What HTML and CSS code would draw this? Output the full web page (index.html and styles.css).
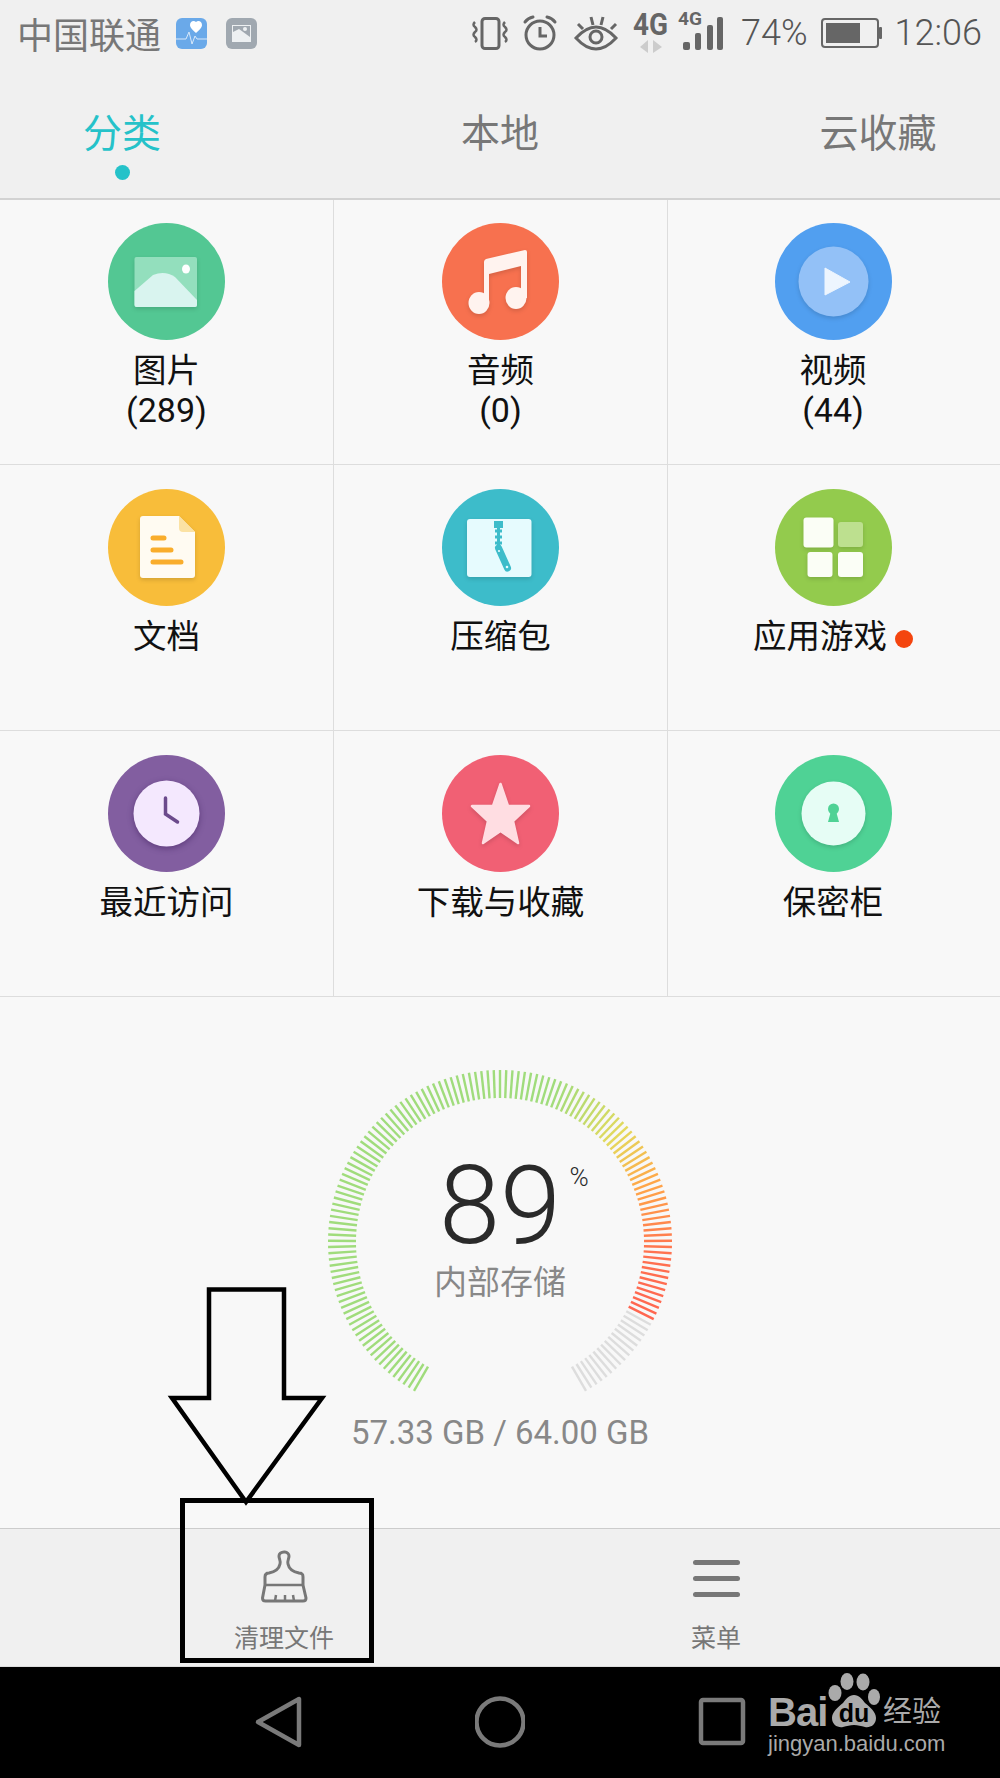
FILE: index.html
```html
<!DOCTYPE html>
<html lang="zh-CN">
<head>
<meta charset="UTF-8">
<meta name="viewport" content="width=device-width, initial-scale=1.0">
<link rel="stylesheet" href="styles.css">
<title>文件管理</title>
</head>
<body>
<div class="phone">

  <div class="status">
    <span class="carrier">中国联通</span>
    <svg class="note-icon" width="31" height="31" viewBox="0 0 31 31">
      <rect width="31" height="31" rx="6" fill="#6aa9e9"/>
      <path d="M20 4c2-2 6-1 6 3 0 3-3 5-6 8-3-3-6-5-6-8 0-4 4-5 6-3z" fill="#fff"/>
      <path d="M0 21h10l3-7 3 12 3-8 2 3h10" fill="none" stroke="#d8e8fa" stroke-width="1"/>
    </svg>
    <svg class="note-icon" width="31" height="31" viewBox="0 0 31 31">
      <rect width="31" height="31" rx="6" fill="#a0a8b0"/>
      <rect x="6" y="7" width="19" height="17" fill="#edf0f2"/>
      <path d="M7 14l6-3 11 8v-11h-17z" fill="#a0a8b0"/>
      <circle cx="19" cy="11" r="2" fill="#edf0f2"/>
    </svg>

    <svg class="status-icons" width="251" height="66" viewBox="0 0 251 66">
      <g fill="none" stroke="#666" stroke-width="3">
        <rect x="10" y="18.500" width="17" height="30" rx="3"/>
        <path d="M3 22q-3 3 0 5q3 3 0 5q-3 3 0 5q3 3 0 5" stroke-width="2.500"/>
        <path d="M33 22q-3 3 0 5q3 3 0 5q-3 3 0 5q3 3 0 5" stroke-width="2.500"/>
        <circle cx="68" cy="35" r="14"/>
        <path d="M68 27v9h7"/>
        <path d="M53 22q3-4 8-5M83 22q-3-4-8-5" stroke-linecap="round"/>
        <path d="M104 38Q124 16 144 38Q124 60 104 38z"/>
        <circle cx="124" cy="37" r="6"/>
        <path d="M106 24l5 5M119 17l2 8M131 17l-2 8M144 24l-5 5"/>
      </g>
      <text class="net-big" x="161" y="35" textLength="35" lengthAdjust="spacingAndGlyphs">4G</text>
      <polygon points="176,40 176,53 168,47" fill="#ccc"/>
      <polygon points="181,40 181,53 190,47" fill="#ccc"/>
      <text class="net-small" x="206" y="25" textLength="24" lengthAdjust="spacingAndGlyphs">4G</text>
      <g fill="#666">
        <rect x="211" y="42" width="7" height="8" rx="2"/>
        <rect x="223" y="33" width="6" height="17" rx="2"/>
        <rect x="235" y="25" width="6" height="25" rx="2"/>
        <rect x="245" y="17" width="6" height="33" rx="2"/>
      </g>
    </svg>
    <span class="level">74%</span>
    <svg class="battery" width="61" height="30" viewBox="0 0 61 30">
      <rect x="1" y="1" width="56" height="28" rx="3" fill="none" stroke="#666" stroke-width="2"/>
      <rect x="5" y="5" width="34" height="20" fill="#666"/>
      <rect x="58" y="9" width="3" height="12" rx="1" fill="#666"/>
    </svg>
    <span class="clock">12:06</span>
  </div>

  <div class="tabs">
    <div class="tab tab-active">分类<i class="tab-dot"></i></div>
    <div class="tab">本地</div>
    <div class="tab">云收藏</div>
  </div>

  <div class="grid">
    <div class="cat">
      <svg class="cat-icon" viewBox="0 0 117 117">
        <circle cx="58.500" cy="58.500" r="58.500" fill="#53c793"/>
        <rect class="soft" x="26.500" y="34" width="62.500" height="50" rx="2" fill="#93dfbd"/>
        <path d="M26.500 68L45 52q12-5 22 2l22 23v5q0 2-2 2H28.500q-2 0-2-2z" fill="#d9f4ef"/>
        <ellipse cx="78" cy="46" rx="4" ry="4.500" fill="#fff"/>
      </svg>
      <div class="cat-name">图片</div>
      <div class="cat-count">(289)</div>
    </div>
    <div class="cat">
      <svg class="cat-icon" viewBox="0 0 117 117">
        <circle cx="58.500" cy="58.500" r="58.500" fill="#f7714f"/>
        <g class="soft" fill="#fff3ef">
          <path d="M42 39q0-2 2-3l39-9q2 0 2 2v46h-6V43l-32 8v30h-5z"/>
          <ellipse cx="37" cy="80" rx="10.500" ry="11"/>
          <ellipse cx="74" cy="75" rx="10.500" ry="11"/>
        </g>
      </svg>
      <div class="cat-name">音频</div>
      <div class="cat-count">(0)</div>
    </div>
    <div class="cat">
      <svg class="cat-icon" viewBox="0 0 117 117">
        <circle cx="58.500" cy="58.500" r="58.500" fill="#519ff0"/>
        <circle class="soft" cx="58.500" cy="58.500" r="35" fill="#93c1f7"/>
        <path d="M50 45l25 14-25 13z" fill="#edf5fe" stroke="#edf5fe" stroke-linejoin="round"/>
      </svg>
      <div class="cat-name">视频</div>
      <div class="cat-count">(44)</div>
    </div>

    <div class="cat">
      <svg class="cat-icon" viewBox="0 0 117 117">
        <circle cx="58.500" cy="58.500" r="58.500" fill="#f8bd3a"/>
        <path class="soft" d="M35 27h36l16 16v43q0 3-3 3H35q-3 0-3-3V30q0-3 3-3z" fill="#fffbf2"/>
        <path d="M71 27l16 16H75q-4 0-4-4z" fill="#fbe2a4"/>
        <g stroke="#f9ad2c" stroke-width="5" stroke-linecap="round">
          <path d="M45 49h11M45 61h18M45 73h28"/>
        </g>
      </svg>
      <div class="cat-name">文档</div>
    </div>
    <div class="cat">
      <svg class="cat-icon" viewBox="0 0 117 117">
        <circle cx="58.500" cy="58.500" r="58.500" fill="#3dbcca"/>
        <rect class="soft" x="25" y="30" width="64.500" height="58" rx="3" fill="#e6fbfe"/>
        <rect x="52" y="32" width="9" height="7" fill="#3dbcca"/>
        <path d="M56.500 39v18M53 42h7M53 48h7M53 54h7" stroke="#3dbcca" stroke-width="3"/>
        <path d="M56.500 59l9 20" stroke="#3dbcca" stroke-width="7" stroke-linecap="round"/>
        <circle cx="65" cy="78" r="1.300" fill="#e6fbfe"/>
        <circle cx="57" cy="62" r="1.100" fill="#e6fbfe"/>
      </svg>
      <div class="cat-name">压缩包</div>
    </div>
    <div class="cat">
      <svg class="cat-icon" viewBox="0 0 117 117">
        <circle cx="58.500" cy="58.500" r="58.500" fill="#93cb4d"/>
        <g class="soft" fill="#fbfef6">
          <rect x="28.500" y="28.500" width="30" height="30" rx="3"/>
          <rect x="63" y="33" width="25" height="25" rx="3" fill="#bde08f"/>
          <rect x="32.500" y="63" width="25" height="25" rx="3"/>
          <rect x="63" y="63" width="25" height="25" rx="3"/>
        </g>
      </svg>
      <div class="cat-name">应用游戏<i class="new-dot"></i></div>
    </div>

    <div class="cat">
      <svg class="cat-icon" viewBox="0 0 117 117">
        <circle cx="58.500" cy="58.500" r="58.500" fill="#825ea0"/>
        <circle class="soft-dark" cx="58.500" cy="58.500" r="33" fill="#f4e8fe"/>
        <path d="M57.500 43v16l12 8" fill="none" stroke="#6b4a8c" stroke-width="3.500" stroke-linecap="round"/>
      </svg>
      <div class="cat-name">最近访问</div>
    </div>
    <div class="cat">
      <svg class="cat-icon" viewBox="0 0 117 117">
        <circle cx="58.500" cy="58.500" r="58.500" fill="#f16074"/>
        <polygon class="soft" points="58.500,29 66,51 87,51 71,66 76,88 58.500,76 41,88 46,66 30,51 51,51" fill="#ffdde2" stroke="#ffdde2" stroke-width="2.500" stroke-linejoin="round"/>
      </svg>
      <div class="cat-name">下载与收藏</div>
    </div>
    <div class="cat">
      <svg class="cat-icon" viewBox="0 0 117 117">
        <circle cx="58.500" cy="58.500" r="58.500" fill="#4fd295"/>
        <circle class="soft" cx="58.500" cy="58.500" r="32" fill="#e6fdf5"/>
        <circle cx="58.500" cy="54" r="5.500" fill="#4fd295"/>
        <path d="M56 56h5l3 11H53z" fill="#4fd295"/>
      </svg>
      <div class="cat-name">保密柜</div>
    </div>
  </div>

  <div class="storage">
    <div class="gauge">
      <svg id="gaugeTicks" width="380" height="340" viewBox="0 0 380 340"></svg>
      <div class="gauge-text">
        <div class="gauge-num">89<span class="gauge-pct">%</span></div>
        <div class="gauge-label">内部存储</div>
      </div>
    </div>
    <div class="storage-size">57.33 GB / 64.00 GB</div>
  </div>

  <div class="actions">
    <div class="action">
      <svg width="47" height="53" viewBox="0 0 47 53" fill="none" stroke="#777" stroke-width="3" stroke-linejoin="round">
        <path d="M23 2c-3 0-5 2-5 4 0 3 2 5 1 8-1 5-6 8-11 9-3 0-4 2-4 4v8L1.500 48c0 2 1 3 3 3H42c2 0 3-1 3-3l-3-13v-8c0-3-1-4-4-4-5-1-10-4-11-9-1-3 1-5 1-8 0-2-2-4-4-4z"/>
        <path d="M4 35h38M14 51l1-6M24 51v-6M33 51l-1-6" stroke-width="2.500"/>
      </svg>
      <span class="action-name">清理文件</span>
    </div>
    <div class="action">
      <div class="menu-icon"><i></i><i></i><i></i></div>
      <span class="action-name">菜单</span>
    </div>
  </div>

  <div class="nav">
    <svg width="50" height="54" viewBox="0 0 50 54" fill="none" stroke="#7a7a7a" stroke-width="4.500" stroke-linejoin="round">
      <path d="M5 27L46 4v46z"/>
    </svg>
    <svg width="50" height="54" viewBox="0 0 50 54" fill="none" stroke="#7a7a7a" stroke-width="4.500">
      <circle cx="25" cy="27" r="23.500"/>
    </svg>
    <svg width="50" height="54" viewBox="0 0 50 54" fill="none" stroke="#7a7a7a" stroke-width="4.500" stroke-linejoin="round">
      <rect x="4" y="5" width="42" height="43" rx="2"/>
    </svg>
  </div>

  <div class="watermark">
    <div class="wm-top">
      <span class="wm-bai">Bai</span>
      <svg class="wm-paw" width="52" height="56" viewBox="0 0 52 56">
        <g fill="#aaa">
          <ellipse cx="7" cy="20" rx="6.500" ry="8"/>
          <ellipse cx="19" cy="8.500" rx="6.500" ry="8.500"/>
          <ellipse cx="35" cy="9" rx="6.500" ry="8.500"/>
          <ellipse cx="46" cy="24" rx="6" ry="8"/>
          <path d="M26 22c5 0 8 4 11 8 5 4 11 9 11 15 0 7-6 10-11 9-4-1-7-2-11-2-4 0-7 1-11 2-5 1-11-2-11-9 0-6 6-11 11-15 3-4 6-8 11-8z"/>
        </g>
        <text class="wm-du" x="26" y="49" text-anchor="middle">du</text>
      </svg>
      <span class="wm-cn">经验</span>
    </div>
    <div class="wm-url">jingyan.baidu.com</div>
  </div>

  <svg class="marks" width="215" height="390" viewBox="0 0 215 390" fill="none" stroke="#000" stroke-width="4.500">
    <path d="M44 9.500V118H7L81 222 157 118H119V9.500z" stroke-linejoin="miter"/>
    <rect x="17.500" y="220.500" width="189" height="160" stroke-width="5"/>
  </svg>
</div>
<script src="gauge.js"></script>
</body>
</html>
```

FILE: styles.css
```css
body {
  margin: 0;
  background-color: #f8f8f8;
  font-family: "Noto Sans CJK SC", sans-serif;
}

.phone {
  position: relative;
  width: 1000px;
  height: 1778px;
  overflow: hidden;
  display: flex;
  flex-direction: column;
}

/* status bar */
.status {
  height: 66px;
  display: flex;
  align-items: center;
  padding: 0 18px;
  background-color: #f0f0f0;
  color: #777;
  flex: none;
}

.carrier {
  font-size: 36px;
  line-height: 40px;
  width: 142px;
  margin-left: -1px;
  margin-right: 1px;
  white-space: nowrap;
}

.note-icon {
  margin-left: 16px;
  margin-right: 3px;
}

.status-icons {
  margin-left: auto;
}

.net-big {
  font: bold 32px Roboto, sans-serif;
  fill: #666;
}

.net-small {
  font: bold 18px Roboto, sans-serif;
  fill: #666;
}

.level,
.clock {
  font-family: Roboto, sans-serif;
  font-size: 36px;
  font-weight: 300;
  color: #555;
  line-height: 40px;
}

.level {
  margin-left: 18px;
}

.battery {
  margin-left: 13px;
}

.clock {
  margin-left: 13px;
}

/* tabs */
.tabs {
  height: 132px;
  display: flex;
  justify-content: space-between;
  background-color: #f0f0f0;
  border-bottom: 2px solid #d2d2d2;
  flex: none;
}

.tab {
  width: 244px;
  padding-top: 41px;
  text-align: center;
  font-size: 39px;
  line-height: 46px;
  color: #777;
}

.tab-active {
  color: #25c2c9;
}

.tab-dot {
  display: block;
  width: 15px;
  height: 15px;
  margin: 12px auto 0;
  border-radius: 50%;
  background-color: #25c2c9;
}

/* category grid */
.grid {
  display: grid;
  grid-template-columns: 334px 334px 332px;
  flex: none;
}

.cat {
  height: 241px;
  border-bottom: 1px solid #ddd;
  border-right: 1px solid #ddd;
  padding-top: 24px;
  text-align: center;
  color: #111;
  font-size: 33.500px;
  line-height: 40px;
}

.cat:nth-child(-n+3) {
  padding-top: 23px;
}

.cat:nth-child(3n) {
  border-right: none;
  padding-right: 2px;
}

.cat-icon {
  display: block;
  width: 117px;
  height: 117px;
  margin: 0 auto 8px;
}

.soft {
  filter: drop-shadow(0 2px 2px rgba(0, 0, 0, 0.14));
}

.soft-dark {
  filter: drop-shadow(0 2px 3px rgba(40, 10, 70, 0.4));
}

.cat-count {
  font-family: Roboto, sans-serif;
  font-size: 34px;
  line-height: 38px;
  margin-top: 3px;
}

.new-dot {
  display: inline-block;
  width: 18px;
  height: 18px;
  margin-left: 8px;
  border-radius: 50%;
  background-color: #f4450f;
}

/* storage gauge */
.storage {
  height: 531px;
  padding-top: 63px;
  box-sizing: border-box;
  text-align: center;
  flex: none;
}

.gauge {
  position: relative;
  width: 380px;
  height: 340px;
  margin: 0 auto;
}

.gauge svg {
  display: block;
}

.gauge-text {
  position: absolute;
  left: 0;
  right: 0;
  top: 92px;
}

.gauge-num {
  position: relative;
  display: block;
  width: 123px;
  margin: 0 auto;
  font-family: Roboto, sans-serif;
  font-weight: 300;
  font-size: 110px;
  line-height: 108px;
  color: #2a2a2a;
}

.gauge-pct {
  position: absolute;
  left: 100%;
  top: 10px;
  margin-left: 8px;
  font-size: 26px;
  line-height: 30px;
}

.gauge-label {
  font-size: 33px;
  line-height: 36px;
  color: #888;
  margin-top: 2px;
}

.storage-size {
  font-family: Roboto, sans-serif;
  font-size: 33px;
  line-height: 40px;
  margin-top: 13px;
  color: #888;
}

/* bottom actions */
.actions {
  height: 137px;
  display: flex;
  justify-content: center;
  gap: 332px;
  background-color: #f0f0f0;
  border-top: 1px solid #ccc;
  flex: none;
}

.action {
  width: 100px;
  height: 137px;
  display: flex;
  flex-direction: column;
  align-items: center;
  color: #777;
}

.action svg {
  margin-top: 21px;
}

.action-name {
  font-size: 25px;
  line-height: 30px;
  white-space: nowrap;
  margin-top: 18px;
}

.menu-icon {
  width: 47px;
  height: 37px;
  margin-top: 31px;
  margin-bottom: 25px;
  display: flex;
  flex-direction: column;
  justify-content: space-between;
}

.menu-icon i {
  height: 5px;
  border-radius: 3px;
  background-color: #777;
}

.menu-icon + .action-name {
  margin-top: -1px;
}

/* navigation bar */
.nav {
  flex: 1;
  display: flex;
  justify-content: center;
  gap: 172px;
  padding-top: 28px;
  background-color: #000;
  border-top: 1px solid #ddd;
}

.nav svg {
  display: block;
}

/* overlays */
.watermark {
  position: absolute;
  left: 768px;
  top: 1673px;
  width: 180px;
  color: #aaa;
}

.wm-top {
  display: flex;
  align-items: flex-end;
  height: 56px;
}

.wm-bai {
  font: bold 40px/40px "Liberation Sans", sans-serif;
  letter-spacing: -1px;
  width: 60px;
  margin-bottom: -3px;
}

.wm-du {
  font: bold 25px "Liberation Sans", sans-serif;
  fill: #000;
}

.wm-cn {
  font-size: 29px;
  line-height: 40px;
  margin-left: 3px;
  white-space: nowrap;
}

.wm-url {
  font: 22px/30px "Liberation Sans", sans-serif;
  white-space: nowrap;
}

.marks {
  position: absolute;
  left: 165px;
  top: 1280px;
}
```

FILE: gauge.js
```js
// dibuja las marcas del indicador de almacenamiento
const svg = document.getElementById('gaugeTicks');
const NS = 'http://www.w3.org/2000/svg';
const cx = 190;
const cy = 182;
const total = 144;
const used = 0.89;

const stops = [
  [-150, [160, 220, 124]],
  [20, [160, 220, 124]],
  [48, [228, 217, 92]],
  [68, [255, 168, 72]],
  [95, [255, 112, 80]],
  [120, [255, 100, 80]]
];

function colorAt(angle) {
  for (let i = 1; i < stops.length; i++) {
    if (angle <= stops[i][0]) {
      const a = stops[i - 1];
      const b = stops[i];
      const t = (angle - a[0]) / (b[0] - a[0]);
      const rgb = a[1].map((v, n) => Math.round(v + (b[1][n] - v) * t));
      return `rgb(${rgb.join(',')})`;
    }
  }
  return '#ff6450';
}

for (let i = 0; i <= total; i++) {
  const angle = -150 + (300 * i) / total;
  const rad = (angle * Math.PI) / 180;
  const line = document.createElementNS(NS, 'line');
  line.setAttribute('x1', cx + 144 * Math.sin(rad));
  line.setAttribute('y1', cy - 144 * Math.cos(rad));
  line.setAttribute('x2', cx + 172 * Math.sin(rad));
  line.setAttribute('y2', cy - 172 * Math.cos(rad));
  line.setAttribute('stroke', i / total <= used ? colorAt(angle) : '#ddd');
  line.setAttribute('stroke-width', '2.4');
  svg.appendChild(line);
}
```
